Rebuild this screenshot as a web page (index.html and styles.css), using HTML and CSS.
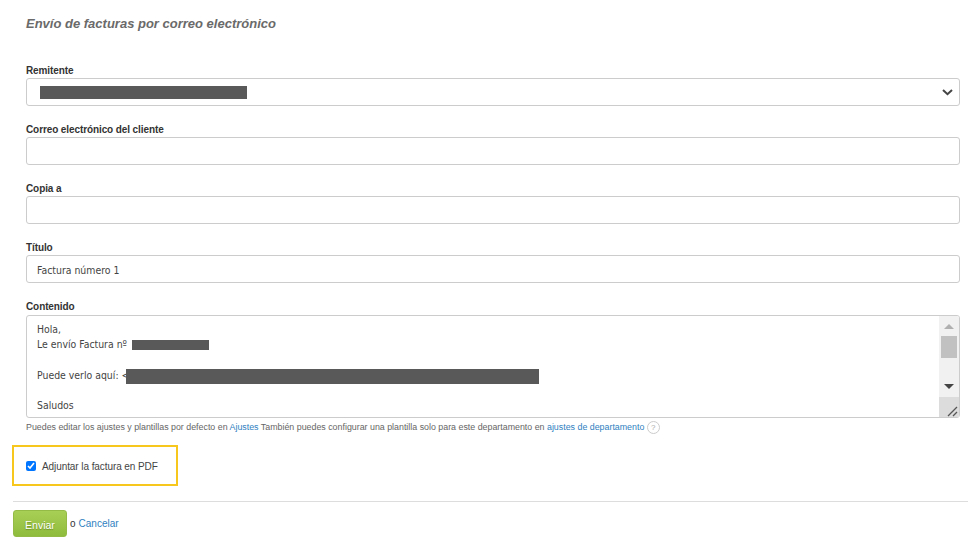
FILE: index.html
```html
<!DOCTYPE html>
<html lang="es">
<head>
    <meta charset="UTF-8">
    <title>Envío de facturas por correo electrónico</title>
    <link rel="stylesheet" href="styles.css">
</head>
<body>
    <h1 class="page-title">Envío de facturas por correo electrónico</h1>

    <form class="invoice-form">
        <div class="form-group">
            <label>Remitente</label>
            <div class="field select-field">
                <span class="redacted redacted-sender"></span>
                <svg class="chevron" width="11" height="7" viewBox="0 0 11 7">
                    <path d="M1 1 L5.5 5.2 L10 1" fill="none" stroke="#444" stroke-width="2"/>
                </svg>
            </div>
        </div>
        <div class="form-group">
            <label for="email">Correo electrónico del cliente</label>
            <input class="field" type="text" id="email">
        </div>
        <div class="form-group">
            <label for="copy">Copia a</label>
            <input class="field" type="text" id="copy">
        </div>
        <div class="form-group">
            <label for="subject">Título</label>
            <input class="field" type="text" id="subject" value="Factura número 1">
        </div>
        <div class="form-group content-group">
            <label>Contenido</label>
            <div class="field content-box">
                <div class="content-text">
                    <div class="line">Hola,</div>
                    <div class="line">Le envío Factura nº <span class="redacted redacted-number"></span></div>
                    <div class="line"></div>
                    <div class="line">Puede verlo aquí: &lt;<span class="redacted redacted-link"></span></div>
                    <div class="line"></div>
                    <div class="line">Saludos</div>
                </div>
                <div class="scrollbar">
                    <svg class="arrow" width="20" height="20" viewBox="0 0 20 20"><path d="M5 13 L10 8 L15 13 Z" fill="#b0b0b0"/></svg>
                    <div class="scroll-track"><div class="scroll-thumb"></div></div>
                    <svg class="arrow" width="20" height="20" viewBox="0 0 20 20"><path d="M5 7 L15 7 L10 12 Z" fill="#444"/></svg>
                    <div class="resizer">
                        <svg width="20" height="20" viewBox="0 0 20 20"><path d="M9 19 L18 10 M14 19 L18 15" stroke="#555" stroke-width="1.3" fill="none"/></svg>
                    </div>
                </div>
            </div>
        </div>
        <p class="help-text">Puedes editar los ajustes y plantillas por defecto en <a href="#">Ajustes</a> También puedes configurar una plantilla solo para este departamento en <a href="#">ajustes de departamento</a> <span class="help-icon">?</span></p>

        <div class="pdf-box">
            <input type="checkbox" id="pdf" checked>
            <label for="pdf">Adjuntar la factura en PDF</label>
        </div>

        <div class="form-actions">
            <button type="button" class="send-btn">Enviar</button>
            <span class="or">o</span>
            <a href="#">Cancelar</a>
        </div>
    </form>
</body>
</html>
```

FILE: styles.css
```css
body {
    font-family: "Liberation Sans", Arial, sans-serif;
    margin: 0;
    padding: 0 0 0 13px;
    color: #333;
    background-color: #fff;
    overflow: hidden;
}
a {
    color: #2f7fc1;
    text-decoration: none;
}
.page-title {
    font-size: 13px;
    line-height: 16px;
    font-weight: bold;
    font-style: italic;
    color: #6a6a6a;
    margin: 0 0 32px 13px;
    padding-top: 16px;
}
.form-group {
    margin: 0 8px 0 13px;
    padding-bottom: 17px;
}
.content-group {
    padding-bottom: 2px;
}
.form-group label {
    display: block;
    font-size: 10px;
    letter-spacing: -0.1px;
    line-height: 12px;
    font-weight: bold;
    color: #333;
    padding-top: 1px;
    margin-bottom: 1px;
}
.content-group label {
    margin-bottom: 2px;
}
.field {
    display: block;
    width: 100%;
    height: 28px;
    box-sizing: border-box;
    border: 1px solid #ccc;
    border-radius: 3px;
    background-color: #fff;
    font-family: "DejaVu Sans Condensed", "DejaVu Sans", sans-serif;
    font-size: 10.4px;
    color: #444;
    padding: 1px 10px 0;
    margin: 0;
}
.select-field {
    display: flex;
    align-items: center;
    justify-content: space-between;
    padding: 0 6px 0 13px;
}
.redacted {
    display: inline-block;
    background-color: #595959;
}
.redacted-sender {
    width: 207px;
    height: 13px;
}
.content-box {
    display: flex;
    height: 103px;
    padding: 0;
    overflow: hidden;
}
.content-text {
    flex: 1;
    padding: 6px 10px 0;
    overflow: hidden;
}
.line {
    height: 15.2px;
    line-height: 15.2px;
    white-space: nowrap;
}
.redacted-number {
    width: 77px;
    height: 10px;
    margin-left: 2px;
    vertical-align: -2px;
}
.redacted-link {
    width: 413px;
    height: 15px;
    margin-left: -3px;
    vertical-align: -5px;
}
.scrollbar {
    width: 20px;
    display: flex;
    flex-direction: column;
    align-items: center;
    background-color: #f1f1f1;
}
.arrow {
    flex: none;
}
.scroll-track {
    flex: 1;
    width: 100%;
}
.scroll-thumb {
    width: 16px;
    height: 22px;
    margin: 0 auto;
    background-color: #c1c1c1;
}
.resizer {
    width: 100%;
    height: 20px;
    background-color: #dcdcdc;
}
.resizer svg {
    display: block;
}
.help-text {
    font-size: 8.86px;
    line-height: 14px;
    color: #666;
    margin: 0 0 0 13px;
    white-space: nowrap;
}
.help-icon {
    display: inline-block;
    width: 11px;
    height: 11px;
    border: 1px solid #ccc;
    border-radius: 50%;
    font-size: 8px;
    line-height: 11px;
    text-align: center;
    color: #aaa;
    margin-left: 0;
}
.pdf-box {
    display: flex;
    align-items: center;
    box-sizing: content-box;
    width: 150px;
    height: 37px;
    margin: 11px 0 0 -1px;
    padding-left: 12px;
    border: 2px solid #f8c71e;
    font-size: 10px;
    letter-spacing: -0.08px;
    color: #444;
}
.pdf-box input {
    width: 10px;
    height: 10px;
    margin: 0 6px 0 0;
}
.pdf-box label {
    padding-top: 1px;
}
.form-actions {
    display: flex;
    align-items: center;
    margin-top: 15px;
    padding-top: 8px;
    border-top: 1px solid #ddd;
    font-size: 10px;
}
.send-btn {
    width: 54px;
    height: 27px;
    border: 1px solid #93bb46;
    border-radius: 3px;
    background: linear-gradient(#a8cf55, #8fbc3d);
    color: #fff;
    font-family: "Liberation Sans", Arial, sans-serif;
    font-size: 10.5px;
    text-shadow: 0 1px 1px rgba(80, 110, 20, 0.6);
    padding: 3px 0 0;
}
.or {
    margin: 0 3px;
}
```
